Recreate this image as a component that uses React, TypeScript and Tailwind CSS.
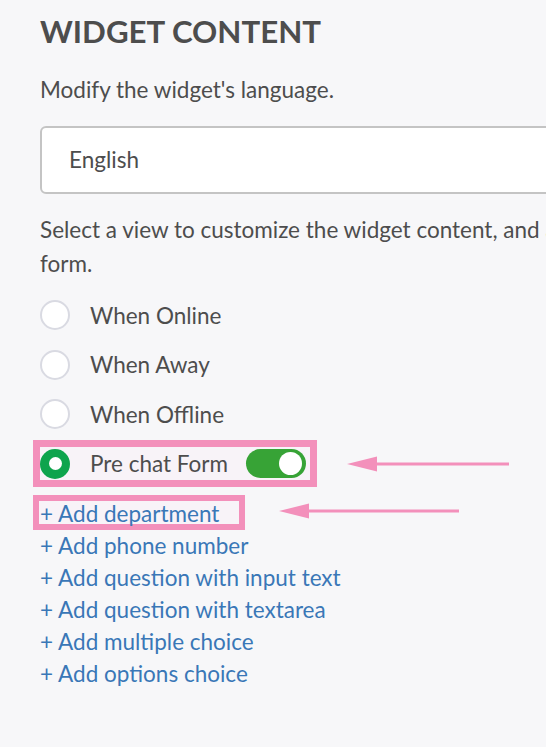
const views = ["When Online", "When Away", "When Offline"];

const links = [
  "+ Add department",
  "+ Add phone number",
  "+ Add question with input text",
  "+ Add question with textarea",
  "+ Add multiple choice",
  "+ Add options choice",
];

function Radio({ checked }: { checked?: boolean }) {
  if (checked) {
    return (
      <span className="flex size-[30px] shrink-0 items-center justify-center rounded-full bg-[#0ea44d]">
        <span className="size-[13px] rounded-full bg-white" />
      </span>
    );
  }
  return <span className="size-[30px] shrink-0 rounded-full border-2 border-[#d9dae2] bg-white" />;
}

// pink annotation arrow pointing left; drawn over the page
function Arrow({ className, length }: { className: string; length: number }) {
  return (
    <svg
      className={className}
      width={length}
      height={16}
      viewBox={`0 0 ${length} 16`}
      fill="#f390bb"
    >
      <polygon points="0,8 30,0.5 30,15.5" />
      <rect x={28} y={6.5} width={length - 28} height={3} />
    </svg>
  );
}

export default function App() {
  return (
    <div
      className="relative h-[747px] w-[546px] overflow-hidden bg-[#f7f7f9] text-[#4d4d4d]"
      style={{ fontFamily: "Lato, 'Open Sans', sans-serif" }}
    >
      <div className="pl-[40px]">
        <h2 className="pt-[11px] text-[31.25px] font-bold leading-[40px] text-[#4d4d4d]">
          WIDGET CONTENT
        </h2>

        <p className="mt-[22px] text-[22.5px] leading-[34px]">Modify the widget's language.</p>

        <div className="mt-[18.7px] flex h-[68px] w-[600px] items-center rounded-[6px] border-2 border-[#c4c4c4] bg-white pl-[27px] text-[22.5px] leading-[27px]">
          English
        </div>

        <p className="mt-[19.3px] whitespace-nowrap text-[22.5px] leading-[34px]">
          Select a view to customize the widget content, and add questions to the pre chat
          <br />
          form.
        </p>

        <div className="mt-[19.2px] flex flex-col gap-[19.5px]">
          {views.map((v) => (
            <label key={v} className="flex h-[30px] items-center gap-[20px] text-[22.5px] leading-[27px]">
              <Radio />
              {v}
            </label>
          ))}

          <div className="relative flex h-[30px] w-fit items-center text-[22.5px] leading-[27px]">
            <span className="absolute -left-[7px] -right-[10.5px] -top-[8.5px] -bottom-[8.5px] border-[7.5px] border-[#f390bb] bg-[#f8f3f8]" />
            <span className="relative">
              <Radio checked />
            </span>
            <span className="relative ml-[20px]">Pre chat Form</span>
            <span className="relative ml-[18px] flex h-[29px] w-[60px] items-center justify-end rounded-full bg-[#37a336] pr-[4px]">
              <span className="size-[23px] rounded-full bg-white" />
            </span>
          </div>
        </div>

        <ul className="mt-[19.5px] flex flex-col text-[22.5px] leading-[32px] text-[#3a77b7]">
          {links.map((l, i) => (
            <li key={l} className="relative w-fit">
              {i === 0 && (
                <span className="absolute -left-[7px] -right-[25.5px] -top-[3px] h-[35px] border-[6px] border-[#f390bb] bg-[#f8f3f8]" />
              )}
              <a href="#" className="relative">
                {l}
              </a>
            </li>
          ))}
        </ul>
      </div>

      <Arrow className="absolute left-[347px] top-[455.5px]" length={162} />
      <Arrow className="absolute left-[279px] top-[503px]" length={180} />
    </div>
  );
}
